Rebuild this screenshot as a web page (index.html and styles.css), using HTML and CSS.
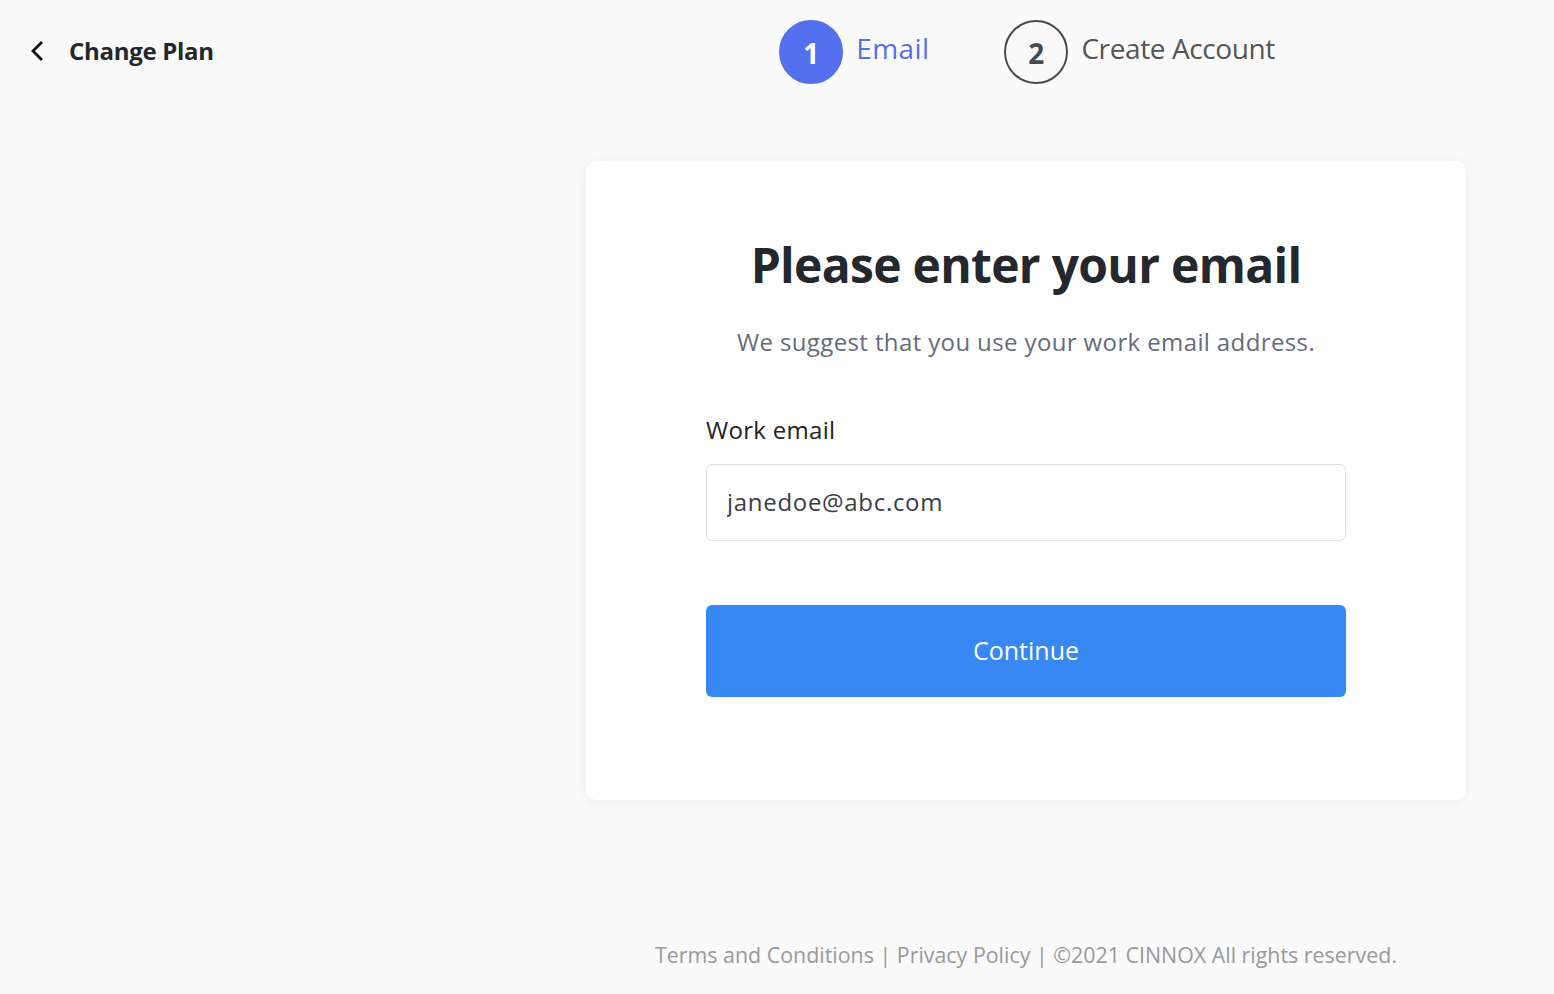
FILE: index.html
```html
<!DOCTYPE html>
<html lang="en">
<head>
<meta charset="utf-8">
<title>Please enter your email</title>
<link rel="stylesheet" href="styles.css">
</head>
<body>
<div class="page">
  <aside class="side">
    <a class="back" href="#">
      <svg class="chev" width="14" height="20" viewBox="0 0 14 20"><path d="M11 2 L3 10 L11 18" fill="none" stroke="#111" stroke-width="2.8" stroke-linecap="square"/></svg>
      <span>Change Plan</span>
    </a>
  </aside>
  <main class="main">
    <nav class="steps">
      <div class="step active"><span class="num">1</span><span class="label">Email</span></div>
      <div class="step"><span class="num">2</span><span class="label">Create Account</span></div>
    </nav>
    <section class="card">
      <h1 class="title">Please enter your email</h1>
      <p class="sub">We suggest that you use your work email address.</p>
      <form class="form">
        <label class="field-label" for="email">Work email</label>
        <input class="input" id="email" type="text" value="janedoe@abc.com">
        <button class="btn" type="button">Continue</button>
      </form>
    </section>
    <footer class="foot">Terms and Conditions | Privacy Policy | ©2021 CINNOX All rights reserved.</footer>
  </main>
</div>
</body>
</html>
```
FILE: styles.css
```css
* { box-sizing: border-box; }
html, body { margin: 0; padding: 0; }
body {
  background: #fafafa;
  font-family: "Open Sans", "Noto Sans", sans-serif;
  color: #24272b;
  width: 1554px;
  height: 994px;
  overflow: hidden;
}
.page {
  display: grid;
  grid-template-columns: 586px 880px;
}
.side { padding: 34px 0 0 30px; }
.back {
  display: flex;
  align-items: center;
  gap: 25px;
  text-decoration: none;
  color: #24272b;
  font-weight: 700;
  font-size: 24px;
  letter-spacing: -0.3px;
}
.chev { display: block; }
.main {
  display: flex;
  flex-direction: column;
  align-items: center;
}
.steps {
  display: flex;
  gap: 75px;
  margin-top: 20px;
  height: 64px;
  padding-left: 2px;
}
.step {
  display: flex;
  align-items: center;
  gap: 13px;
}
.num {
  width: 64px;
  height: 64px;
  border-radius: 50%;
  border: 2px solid #4a4a4a;
  color: #4a4a4a;
  display: flex;
  align-items: center;
  justify-content: center;
  font-size: 28px;
  font-weight: 700;
  padding-top: 1px;
}
.label {
  font-size: 28px;
  color: #555;
  margin-top: -8px;
  letter-spacing: -0.4px;
}
.step.active .num {
  background: #5470ee;
  border-color: #5470ee;
  color: #fff;
}
.step.active .label { color: #5470ea; letter-spacing: 0.4px; }
.card {
  margin-top: 77px;
  width: 880px;
  height: 639px;
  background: #fff;
  border-radius: 10px;
  box-shadow: 0 2px 12px rgba(0,0,0,0.06);
  display: flex;
  flex-direction: column;
  align-items: center;
  padding-top: 74px;
}
.title {
  margin: 0;
  font-size: 48px;
  font-weight: 700;
  line-height: 60px;
  color: #24272b;
  letter-spacing: -0.7px;
}
.sub {
  margin: 31px 0 0;
  font-size: 24px;
  line-height: 32px;
  color: #676b7a;
  letter-spacing: 0.38px;
}
.form {
  width: 640px;
  margin-top: 57px;
  display: flex;
  flex-direction: column;
}
.field-label {
  font-size: 24px;
  line-height: 30px;
  color: #222;
  letter-spacing: 0.3px;
}
.input {
  margin-top: 19px;
  height: 77px;
  border: 1px solid #e0e0e0;
  border-radius: 6px;
  padding: 0 20px 2px;
  font-family: inherit;
  font-size: 24px;
  color: #3a3d45;
  background: #fff;
  outline: none;
  letter-spacing: 0.7px;
}
.btn {
  margin-top: 64px;
  height: 92px;
  border: none;
  border-radius: 6px;
  background: #3788f5;
  color: #fff;
  font-family: inherit;
  font-size: 25px;
  cursor: pointer;
  padding-bottom: 4px;
}
.foot {
  margin-top: 140px;
  font-size: 21.4px;
  color: #999;
}
```
